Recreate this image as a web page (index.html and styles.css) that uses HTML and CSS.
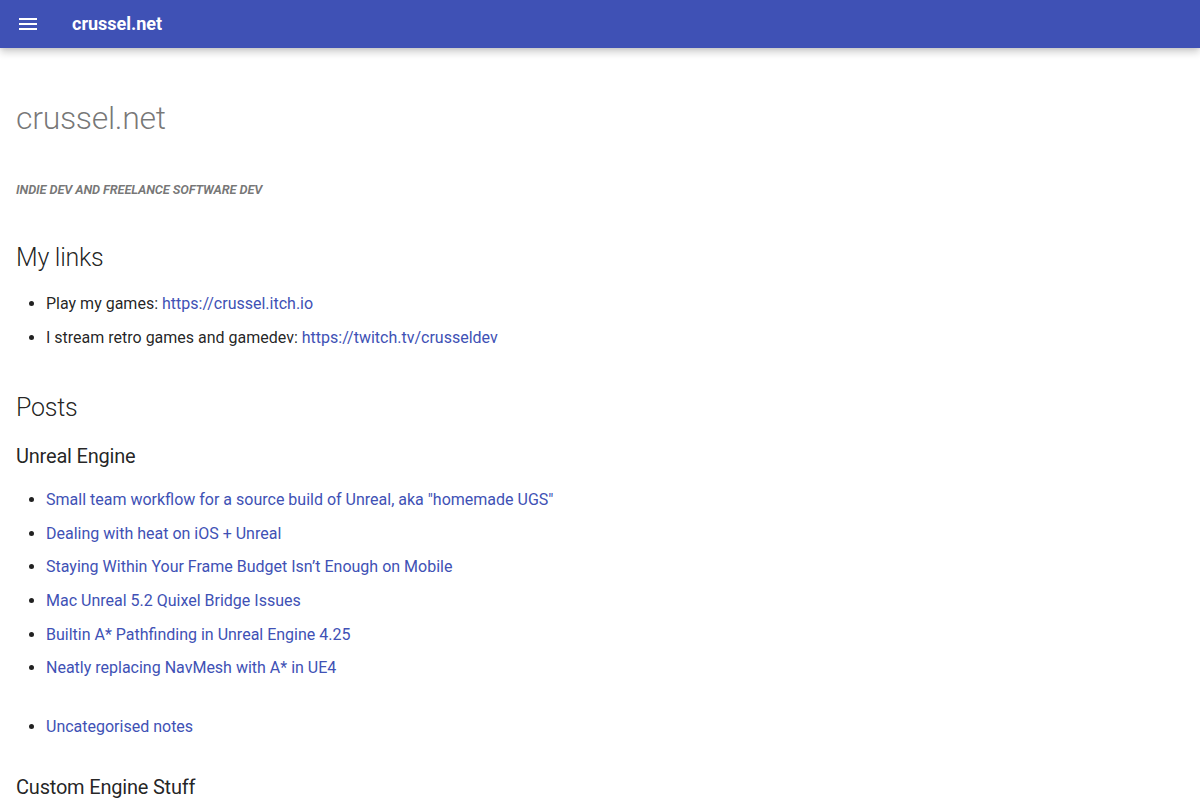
FILE: index.html
```html
<!DOCTYPE html>
<html lang="en">
<head>
<meta charset="utf-8">
<title>crussel.net</title>
<link rel="stylesheet" href="styles.css">
</head>
<body>
<header class="header">
  <button class="header-btn" aria-label="Menu">
    <svg viewBox="0 0 24 24" width="24" height="24"><path d="M3 6h18v2H3V6m0 5h18v2H3v-2m0 5h18v2H3v-2z" fill="currentColor"/></svg>
  </button>
  <div class="header-title">crussel.net</div>
</header>
<main class="content">
  <article class="typeset">
    <h1>crussel.net</h1>
    <h5><em>Indie dev and freelance software dev</em></h5>
    <h2>My links</h2>
    <ul>
      <li>Play my games: <a href="#">https://crussel.itch.io</a></li>
      <li>I stream retro games and gamedev: <a href="#">https://twitch.tv/crusseldev</a></li>
    </ul>
    <h2>Posts</h2>
    <h3 class="first-sub">Unreal Engine</h3>
    <ul>
      <li><a href="#">Small team workflow for a source build of Unreal, aka "homemade UGS"</a></li>
      <li><a href="#">Dealing with heat on iOS + Unreal</a></li>
      <li><a href="#">Staying Within Your Frame Budget Isn’t Enough on Mobile</a></li>
      <li><a href="#">Mac Unreal 5.2 Quixel Bridge Issues</a></li>
      <li><a href="#">Builtin A* Pathfinding in Unreal Engine 4.25</a></li>
      <li><a href="#">Neatly replacing NavMesh with A* in UE4</a></li>
    </ul>
    <ul class="spaced">
      <li><a href="#">Uncategorised notes</a></li>
    </ul>
    <h3>Custom Engine Stuff</h3>
  </article>
</main>
</body>
</html>
```

FILE: styles.css
```css
html, body {
  margin: 0;
  padding: 0;
  background: #fff;
}

body {
  font-family: Roboto, "Liberation Sans", sans-serif;
  font-size: 16px;
  color: rgba(0, 0, 0, 0.87);
  -webkit-font-smoothing: antialiased;
}

.header {
  position: sticky;
  top: 0;
  z-index: 2;
  height: 48px;
  display: flex;
  align-items: center;
  background: #3f51b5;
  color: #fff;
  box-shadow: 0 0 4px rgba(0, 0, 0, 0.1), 0 4px 8px rgba(0, 0, 0, 0.2);
}

.header-btn {
  display: flex;
  align-items: center;
  justify-content: center;
  margin: 0 0 0 12px;
  padding: 4px;
  border: 0;
  background: none;
  color: inherit;
}

.header-title {
  margin-left: 28px;
  font-size: 18px;
  font-weight: 700;
  line-height: 48px;
}

.content {
  padding: 50px 16px 24px;
}

.typeset {
  line-height: 1.6;
}

.typeset h1 {
  margin: 0 0 40px;
  font-size: 32px;
  font-weight: 300;
  line-height: 1.3;
  color: rgba(0, 0, 0, 0.54);
  letter-spacing: -0.01em;
}

.typeset h5 {
  margin: 16px 0;
  font-size: 12.8px;
  font-weight: 700;
  text-transform: uppercase;
  color: rgba(0, 0, 0, 0.54);
  letter-spacing: -0.01em;
}

.typeset h2 {
  margin: 40px 0 16px;
  font-size: 25px;
  font-weight: 300;
  line-height: 1.4;
  letter-spacing: -0.01em;
}

.typeset h3 {
  margin: 33px 0 16px;
  font-size: 20px;
  font-weight: 400;
  line-height: 1.5;
  letter-spacing: -0.01em;
}

.typeset h3.first-sub {
  margin-top: 16px;
}

.typeset ul {
  margin: 16px 0 16px 10px;
  padding: 0;
  list-style: disc;
}

.typeset ul.spaced {
  margin-top: 33px;
}

.typeset li {
  margin: 0 0 8px 20px;
}

.typeset a {
  color: #4051b5;
  text-decoration: none;
}
```
